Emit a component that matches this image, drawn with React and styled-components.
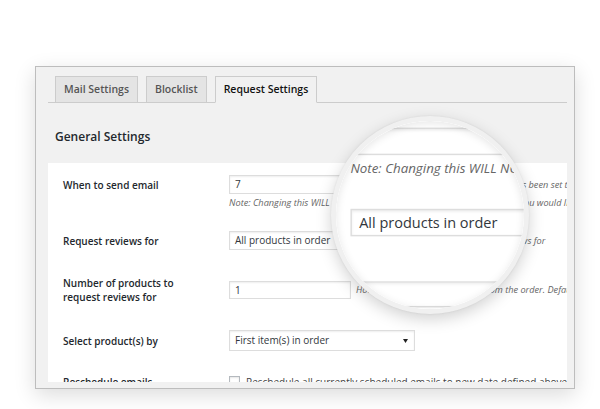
import React from 'react';
import styled, { createGlobalStyle } from 'styled-components';

const GlobalStyle = createGlobalStyle`
  html, body {
    margin: 0;
    padding: 0;
    background: #fff;
  }
  body {
    width: 600px;
    height: 409px;
    overflow: hidden;
    font-family: "Open Sans", "Liberation Sans", sans-serif;
  }
`;

const Page = styled.div`
  padding: 66px 0 0 35px;
`;

const Window = styled.div`
  position: relative;
  width: 540px;
  height: 323px;
  box-sizing: border-box;
  border: 1px solid #bdbdbd;
  background: #f1f1f1;
  box-shadow: 0 6px 20px rgba(0, 0, 0, 0.14);
  padding: 0 6px 6px 12px;
`;

const Panel = styled.div`
  width: 520px;
  height: 315px;
  display: flex;
  flex-direction: column;
  background: #f1f1f1;
`;

const TabStrip = styled.div`
  display: flex;
  gap: 8px;
  padding: 9px 0 0 7px;
  border-bottom: 1px solid #ccc;
  margin-right: 1px;
`;

const Tab = styled.div`
  height: 27px;
  box-sizing: border-box;
  margin-bottom: -1px;
  padding: 0 8px;
  border: 1px solid #ccc;
  border-bottom-color: ${p => (p.$active ? '#f1f1f1' : '#ccc')};
  background: ${p => (p.$active ? '#f1f1f1' : '#e4e4e4')};
  color: ${p => (p.$active ? '#111' : '#555')};
  font-size: 10.5px;
  font-weight: 600;
  line-height: 25px;
  white-space: nowrap;
`;

const Heading = styled.h3`
  margin: 26px 0 18px 7px;
  font-size: 12px;
  line-height: 16px;
  font-weight: 600;
  color: #23282d;
`;

const FormArea = styled.div`
  flex: 1;
  min-height: 0;
  overflow: hidden;
  background: #fff;
  padding: 0 0 0 15px;
  margin-right: 1px;
`;

const Row = styled.div`
  display: flex;
  align-items: ${p => p.$align || 'center'};
  padding: ${p => p.$pad || '12px 0'};
`;

const Label = styled.div`
  flex: none;
  width: 166px;
  min-height: 19px;
  box-sizing: border-box;
  padding-right: 26px;
  display: flex;
  align-items: center;
  font-size: 10px;
  font-weight: 600;
  line-height: 14px;
  color: #23282d;
`;

const Field = styled.div`
  flex: 1;
  min-width: 0;
  white-space: nowrap;
`;

const Line = styled.div`
  display: flex;
  align-items: center;
  gap: 5px;
`;

const Input = styled.div`
  flex: none;
  width: ${p => p.$w || 122}px;
  height: ${p => p.$h || 19}px;
  box-sizing: border-box;
  padding: 0 5px;
  border: 1px solid #ddd;
  box-shadow: inset 0 1px 2px rgba(0, 0, 0, 0.07);
  background: #fff;
  color: #32373c;
  font-size: 10px;
  line-height: ${p => (p.$h || 19) - 2}px;
`;

const Select = styled(Input)`
  display: flex;
  align-items: center;
  justify-content: space-between;
  padding-right: 6px;
`;

const Desc = styled.span`
  font-size: 9.2px;
  font-style: italic;
  color: #666;
  line-height: 12px;
`;

const Note = styled(Desc)`
  display: block;
  margin-top: 3px;
`;

const Check = styled.span`
  flex: none;
  width: 11px;
  height: 11px;
  box-sizing: border-box;
  border: 1px solid #b4b9be;
  box-shadow: inset 0 1px 2px rgba(0, 0, 0, 0.1);
  background: #fff;
`;

const CheckText = styled.span`
  font-size: 10px;
  color: #444;
  margin-left: 1px;
`;

const Lens = styled.div`
  position: absolute;
  left: 295px;
  top: 49px;
  width: 198px;
  height: 198px;
  box-sizing: border-box;
  border-radius: 50%;
  border: 5px solid #f0f0f0;
  background: #fff;
  overflow: hidden;
  box-shadow: 0 5px 16px rgba(0, 0, 0, 0.18), 0 0 2px rgba(0, 0, 0, 0.08);
`;

const LensShade = styled.div`
  position: absolute;
  inset: 0;
  border-radius: 50%;
  box-shadow: inset 0 2px 8px rgba(0, 0, 0, 0.1);
`;

const Magnified = styled.div`
  position: absolute;
  left: -248.5px;
  top: -150.2px;
  transform: scale(1.45);
  transform-origin: 0 0;
`;

const Arrow = () => (
  <svg width="5" height="4" viewBox="0 0 5 4">
    <path d="M0 0 L5 0 L2.5 4 Z" fill="#222" />
  </svg>
);

function SettingsPanel() {
  return (
    <Panel>
      <TabStrip>
        <Tab>Mail Settings</Tab>
        <Tab>Blocklist</Tab>
        <Tab $active>Request Settings</Tab>
      </TabStrip>
      <Heading>General Settings</Heading>
      <FormArea>
        <Row $align="flex-start" $pad="12px 0 10px">
          <Label>When to send email</Label>
          <Field>
            <Line>
              <Input>7</Input>
              <Desc>Number of days after the order status has been set to completed</Desc>
            </Line>
            <Note>
              Note: Changing this WILL NOT change the currently scheduled emails. If you would like to reschedule them, use the option below.
            </Note>
          </Field>
        </Row>
        <Row $pad="12px 0">
          <Label>Request reviews for</Label>
          <Field>
            <Line>
              <Select $w={186}>
                <span>All products in order</span>
                <Arrow />
              </Select>
              <Desc>Products to request reviews for</Desc>
            </Line>
          </Field>
        </Row>
        <Row $pad="14px 0">
          <Label>Number of products to request reviews for</Label>
          <Field>
            <Line>
              <Input $h={18}>1</Input>
              <Desc>How many products to request from the order. Default is 1.</Desc>
            </Line>
          </Field>
        </Row>
        <Row $pad="12px 0">
          <Label>Select product(s) by</Label>
          <Field>
            <Line>
              <Select $w={186} $h={21}>
                <span>First item(s) in order</span>
                <Arrow />
              </Select>
            </Line>
          </Field>
        </Row>
        <Row $pad="9px 0">
          <Label>Reschedule emails</Label>
          <Field>
            <Line>
              <Check />
              <CheckText>Reschedule all currently scheduled emails to new date defined above</CheckText>
            </Line>
          </Field>
        </Row>
      </FormArea>
    </Panel>
  );
}

export default function App() {
  return (
    <>
      <GlobalStyle />
      <Page>
        <Window>
          <SettingsPanel />
          <Lens aria-hidden="true">
            <Magnified>
              <SettingsPanel />
            </Magnified>
            <LensShade />
          </Lens>
        </Window>
      </Page>
    </>
  );
}
